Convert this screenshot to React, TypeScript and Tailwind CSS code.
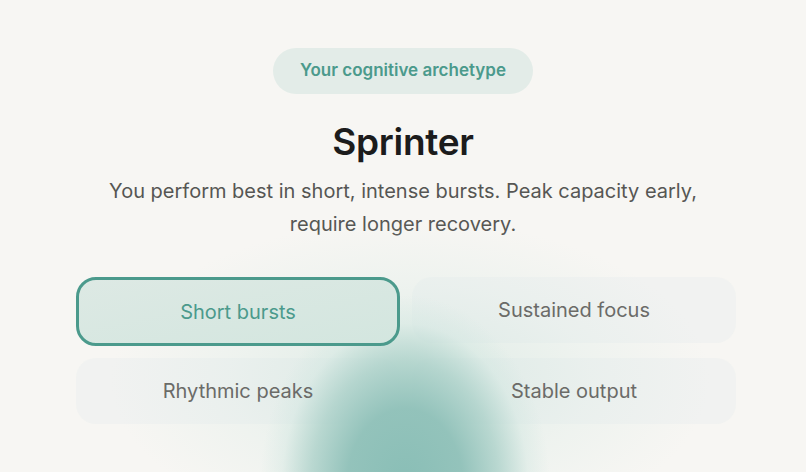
import React from "react";

const Card = ({ label, selected }: { label: string; selected?: boolean }) =>
  selected ? (
    <div className="relative z-[2] h-[69px] rounded-[20px] border-[3px] border-[#4b9a8c] bg-gradient-to-br from-[#dde9e4] to-[#d3e6df] flex items-center justify-center text-[20px] text-[#4b9a8c] font-normal">
      <span>{label}</span>
    </div>
  ) : (
    <div className="h-[66px] rounded-[20px] bg-[#eef1f0]/70 flex items-center justify-center text-[20px] text-[#6b6b68] font-normal">
      <span className="relative z-[2]">{label}</span>
    </div>
  );

export default function App() {
  return (
    <div
      className="relative w-[806px] h-[472px] overflow-hidden bg-[#f7f6f3]"
      style={{ fontFamily: "Inter, 'Noto Sans', sans-serif" }}
    >
      <div className="relative flex flex-col items-center pt-[48px]">
        <div className="h-[46px] w-[260px] rounded-full bg-[#e3ece8] flex items-center justify-center text-[17px] font-semibold text-[#4b9a8c]">
          Your cognitive archetype
        </div>
        <h1 className="mt-[24px] text-[37px] leading-[48px] font-semibold text-[#1c1c1c] tracking-[-0.3px]">
          Sprinter
        </h1>
        <p className="mt-[9px] w-[640px] text-center text-[20px] leading-[33px] text-[#565653]">
          You perform best in short, intense bursts. Peak capacity early, require longer recovery.
        </p>
        <div className="mt-[36px] ml-[6px] w-[660px] grid grid-cols-2 gap-x-[12px] gap-y-[12px] items-start">
          <Card label="Short bursts" selected />
          <Card label="Sustained focus" />
          <Card label="Rhythmic peaks" />
          <Card label="Stable output" />
        </div>
      </div>
      <div
        className="pointer-events-none absolute z-[1] left-[110px] top-[220px] w-[600px] h-[320px] rounded-full"
        style={{
          background:
            "radial-gradient(closest-side, rgba(195,224,215,0.5) 0%, rgba(215,234,228,0.28) 60%, rgba(240,244,242,0) 100%)",
        }}
      />
      <div
        className="pointer-events-none absolute z-[1] left-[260px] top-[295px] w-[290px] h-[380px] rounded-full"
        style={{
          background:
            "radial-gradient(closest-side, rgba(137,190,182,1) 0%, rgba(142,192,184,0.94) 40%, rgba(168,207,199,0.75) 65%, rgba(208,230,224,0.4) 85%, rgba(235,242,239,0) 100%)",
        }}
      />
    </div>
  );
}
